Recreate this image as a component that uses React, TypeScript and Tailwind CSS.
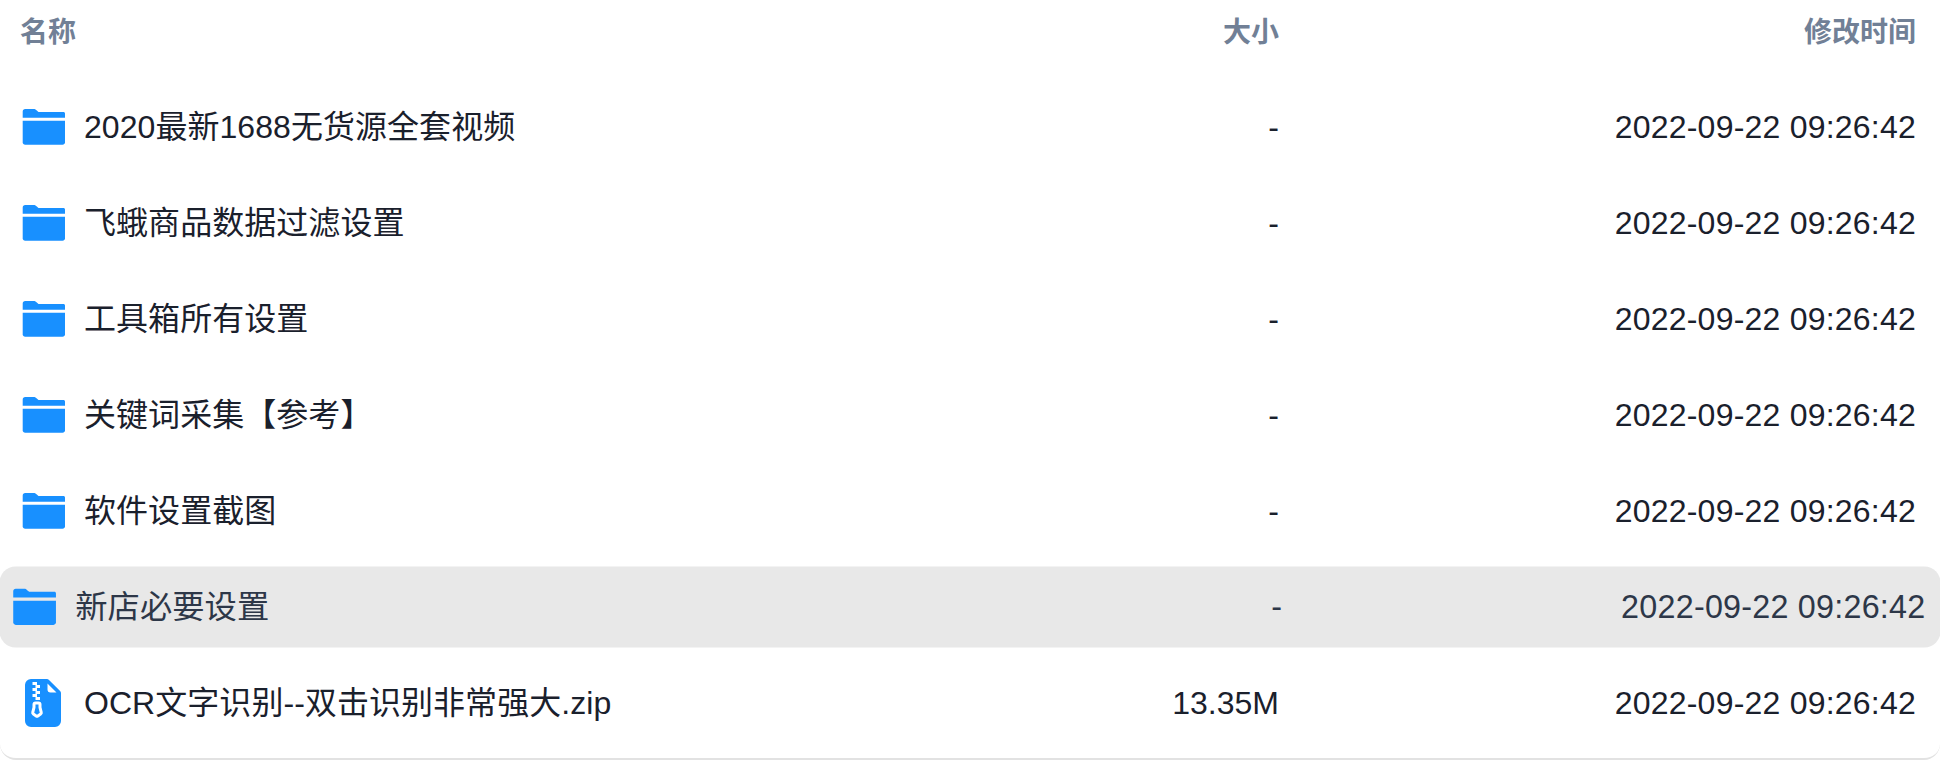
import { BsFileEarmarkZipFill } from "react-icons/bs";

type Row = { name: string; size: string; kind: "folder" | "zip"; hover?: boolean };

const DATE = "2022-09-22 09:26:42";

const ROWS: Row[] = [
  { name: "2020最新1688无货源全套视频", size: "-", kind: "folder" },
  { name: "飞蛾商品数据过滤设置", size: "-", kind: "folder" },
  { name: "工具箱所有设置", size: "-", kind: "folder" },
  { name: "关键词采集【参考】", size: "-", kind: "folder" },
  { name: "软件设置截图", size: "-", kind: "folder" },
  { name: "新店必要设置", size: "-", kind: "folder", hover: true },
  { name: "OCR文字识别--双击识别非常强大.zip", size: "13.35M", kind: "zip" },
];

function FolderIcon() {
  return (
    <svg viewBox="0 0 48 48" className="h-12 w-12 shrink-0" fill="#1890ff" aria-hidden>
      <path d="M3.700 8.500C3.700 7 4.700 6 6.200 6H14.500c1.400 0 2 .4 3 1.300L19.500 9H44.500c.8 0 1.500.7 1.500 1.500V14.700H3.700z" />
      <path d="M3.700 17.700H46V39.200C46 40.700 45 41.700 43.500 41.700H6.200C4.700 41.700 3.700 40.700 3.700 39.200z" />
    </svg>
  );
}

function FileRow({ row }: { row: Row }) {
  return (
    <div
      className={
        row.hover
          ? "grid h-20 scale-[1.01] grid-cols-[1fr_190px_637px] items-center rounded-2xl bg-[#e8e8e8] pr-[15px] pl-[10px] text-[#2d3748]"
          : "grid h-20 grid-cols-[1fr_190px_637px] items-center rounded-2xl pr-[15px] pl-[10px]"
      }
    >
      <div className="flex items-center gap-[17px]">
        {row.kind === "folder" ? (
          <FolderIcon />
        ) : (
          <BsFileEarmarkZipFill className="h-12 w-12 shrink-0 text-[#1890ff]" />
        )}
        <span className="tracking-[0.05px]">{row.name}</span>
      </div>
      <span className="text-right">{row.size}</span>
      <span className="text-right tracking-[0.22px]">{DATE}</span>
    </div>
  );
}

export default function App() {
  return (
    <div className="h-[760px] w-[1940px] overflow-hidden bg-white">
      <div className="h-[760px] rounded-b-2xl border-b-2 border-[#e2e2e2] px-[9px] font-['Liberation_Sans','Noto_Sans_CJK_SC',sans-serif] text-[32px] leading-[48px] text-[#1a202c]">
        <div className="grid h-[65px] grid-cols-[1fr_190px_637px] items-center pr-[15px] pl-[11px] text-[28px] font-bold text-[#718096]">
          <span>名称</span>
          <span className="text-right">大小</span>
          <span className="text-right">修改时间</span>
        </div>
        <div className="flex flex-col gap-4 pt-[22px]">
          {ROWS.map((row) => (
            <FileRow key={row.name} row={row} />
          ))}
        </div>
      </div>
    </div>
  );
}
